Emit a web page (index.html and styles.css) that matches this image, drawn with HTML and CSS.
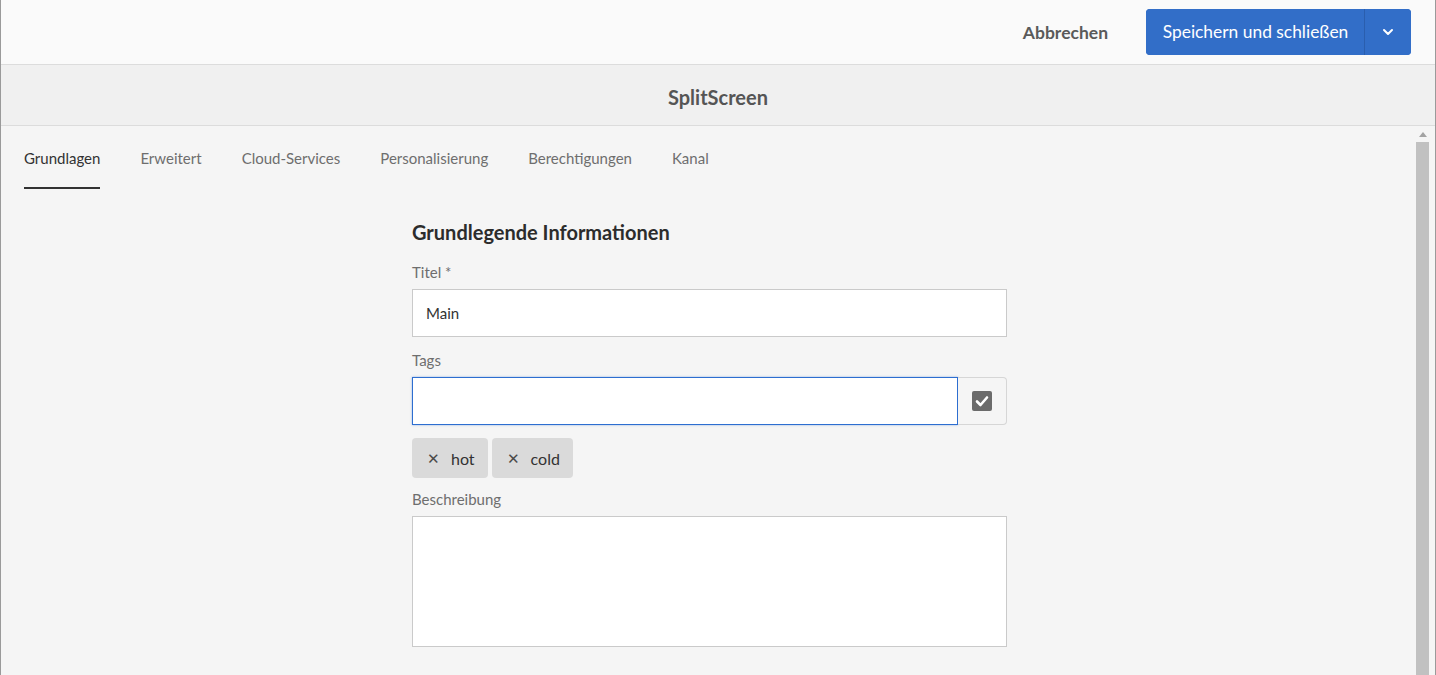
FILE: index.html
```html
<!DOCTYPE html>
<html lang="de">
<head>
<meta charset="utf-8">
<title>SplitScreen</title>
<link rel="stylesheet" href="styles.css">
</head>
<body>
<div class="frame">
  <header class="topbar">
    <button class="btn-quiet">Abbrechen</button>
    <div class="split-btn">
      <button class="btn-primary">Speichern und schließen</button>
      <button class="btn-caret" aria-label="Mehr">
        <svg width="12" height="8" viewBox="0 0 12 8"><path d="M2 2 L6 6 L10 2" fill="none" stroke="#fff" stroke-width="2" stroke-linecap="round" stroke-linejoin="round"/></svg>
      </button>
    </div>
  </header>
  <div class="titlebar">SplitScreen</div>
  <div class="body-row">
    <main class="content">
      <nav class="tabs">
        <a class="tab active">Grundlagen</a>
        <a class="tab">Erweitert</a>
        <a class="tab">Cloud-Services</a>
        <a class="tab">Personalisierung</a>
        <a class="tab">Berechtigungen</a>
        <a class="tab">Kanal</a>
      </nav>
      <section class="form">
        <h2 class="heading">Grundlegende Informationen</h2>
        <label class="label">Titel *</label>
        <div class="field title-field">Main</div>
        <label class="label">Tags</label>
        <div class="tag-row">
          <div class="field focus"></div>
          <button class="check-btn" aria-label="Auswählen">
            <svg width="20" height="20" viewBox="0 0 20 20"><rect x="0" y="0" width="20" height="20" rx="2" fill="#6b6b6b"/><path d="M5 10.5 L8.5 14 L15 6.5" fill="none" stroke="#fff" stroke-width="2.6" stroke-linecap="round" stroke-linejoin="round"/></svg>
          </button>
        </div>
        <div class="chips">
          <span class="chip"><span class="x">✕</span>hot</span>
          <span class="chip"><span class="x">✕</span>cold</span>
        </div>
        <label class="label">Beschreibung</label>
        <div class="area"></div>
      </section>
    </main>
    <div class="scrollbar">
      <div class="arrow"></div>
      <div class="thumb"></div>
    </div>
  </div>
</div>
</body>
</html>
```
FILE: styles.css
```css
* { box-sizing: border-box; }
html, body { margin: 0; padding: 0; height: 100%; overflow: hidden; }
body {
  font-family: Lato, "Open Sans", sans-serif;
  color: #323232;
  background: #f5f5f5;
}
.frame {
  height: 675px;
  display: flex;
  flex-direction: column;
  border-left: 1px solid #9a9a9a;
  border-right: 1px solid #9a9a9a;
}
.topbar {
  height: 65px;
  flex: none;
  background: #fafafa;
  border-bottom: 1px solid #dcdcdc;
  display: flex;
  align-items: center;
  justify-content: flex-end;
  padding-right: 24px;
}
.btn-quiet {
  border: 0;
  background: transparent;
  font: 700 17.5px Lato, sans-serif;
  color: #5a5a5a;
  margin-right: 38px;
  padding: 0;
}
.split-btn {
  display: flex;
  height: 46px;
  margin-top: -1px;
  border-radius: 4px;
  overflow: hidden;
  background: #326ec8;
}
.btn-primary {
  border: 0;
  background: #326ec8;
  color: #fff;
  font: 400 17.4px Lato, sans-serif;
  padding: 0 14px 0 15px;
  width: 219px;
  border-right: 1px solid #2a5eae;
}
.btn-caret {
  border: 0;
  background: #326ec8;
  width: 46px;
  display: flex;
  align-items: center;
  justify-content: center;
  padding: 0;
}
.titlebar {
  height: 61px;
  flex: none;
  background: #f0f0f0;
  border-bottom: 1px solid #dcdcdc;
  display: flex;
  align-items: center;
  justify-content: center;
  font-weight: 700;
  font-size: 20px;
  color: #555;
  padding-top: 3px;
}
.body-row {
  flex: 1;
  display: flex;
  min-height: 0;
}
.content {
  flex: 1;
  background: #f5f5f5;
}
.tabs {
  display: flex;
  gap: 40px;
  padding: 0 23px;
  height: 63px;
}
.tab {
  font-size: 15px;
  color: #6e6e6e;
  padding-top: 23px;
  height: 63px;
  border-bottom: 2px solid transparent;
}
.tab.active {
  color: #323232;
  border-bottom-color: #323232;
}
.form {
  width: 595px;
  margin-left: 411px;
  padding-top: 31px;
}
.heading {
  margin: 0 0 19px;
  font-size: 20px;
  font-weight: 700;
  color: #2c2c2c;
  line-height: 24px;
}
.label {
  display: block;
  font-size: 15px;
  color: #6e6e6e;
  line-height: 18px;
  margin-bottom: 8px;
}
.field {
  height: 48px;
  background: #fff;
  border: 1px solid #cacaca;
  font-size: 15px;
  color: #323232;
  padding: 0 13px;
  display: flex;
  align-items: center;
}
.title-field {
  margin-bottom: 14px;
}
.tag-row {
  display: flex;
  margin-bottom: 13px;
}
.tag-row .field {
  flex: 1;
  margin: 0;
}
.field.focus {
  border-color: #2d6ed0;
  box-shadow: 0 0 2px rgba(45,110,208,0.5);
}
.check-btn {
  width: 49px;
  height: 48px;
  background: #f5f5f5;
  border: 1px solid #d6d6d6;
  border-left: 0;
  border-radius: 0 4px 4px 0;
  display: flex;
  align-items: center;
  justify-content: center;
  padding: 0;
}
.chips {
  display: flex;
  gap: 4px;
  margin-bottom: 12px;
}
.chip {
  height: 40px;
  background: #dadada;
  border-radius: 4px;
  display: flex;
  align-items: center;
  padding: 0 13px 0 15px;
  font-size: 16px;
  color: #323232;
}
.chip .x {
  font-size: 15px;
  color: #4b4b4b;
  margin-right: 11px;
}
.area {
  height: 131px;
  background: #fff;
  border: 1px solid #cacaca;
}
.scrollbar {
  width: 22px;
  flex: none;
  background: #f5f5f5;
  display: flex;
  flex-direction: column;
  align-items: center;
  padding-right: 3px;
}
.arrow {
  width: 0;
  height: 0;
  margin-top: 6px;
  border-left: 4px solid transparent;
  border-right: 4px solid transparent;
  border-bottom: 5px solid #a3a3a3;
  margin-bottom: 5px;
}
.thumb {
  width: 13px;
  flex: 1;
  background: #c1c1c1;
}
```
